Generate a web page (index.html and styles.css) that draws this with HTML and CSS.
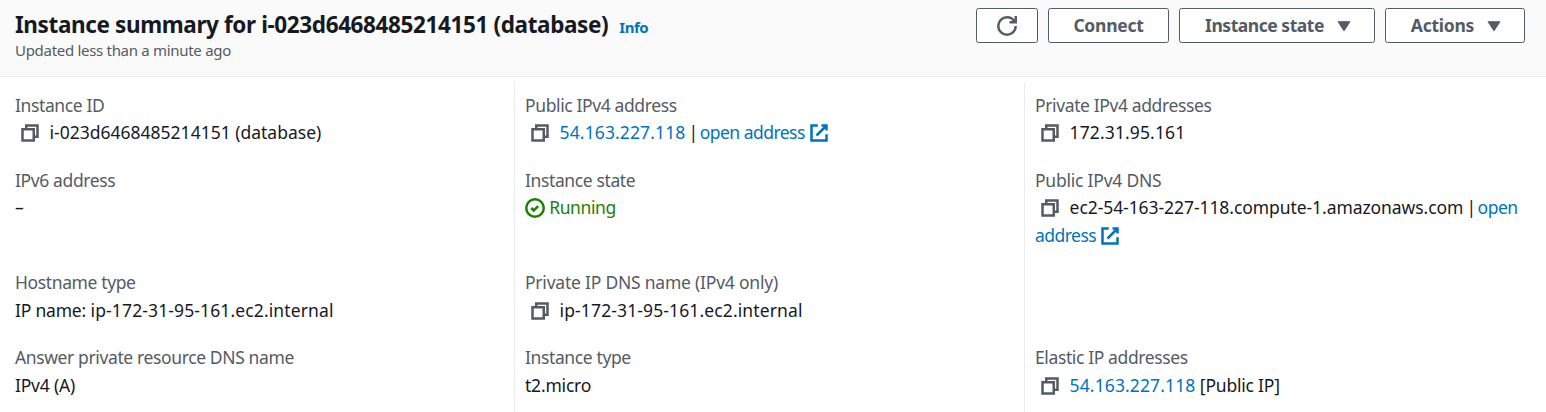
FILE: index.html
```
<!DOCTYPE html>
<html lang="en">
<head>
<meta charset="utf-8">
<title>Instance summary</title>
<link rel="stylesheet" href="styles.css">
</head>
<body>
<svg class="sprite" aria-hidden="true">
  <symbol id="copy" viewBox="0 0 16 16"><path d="M2 5h9v9H2z"/><path d="M5 5V2h9v9h-3"/></symbol>
  <symbol id="external" viewBox="0 0 16 16"><path d="M10 2h4v4"/><path d="M6 10l8-8"/><path d="M14 9.048V14H2V2h5"/></symbol>
  <symbol id="check" viewBox="0 0 16 16"><circle cx="8" cy="8" r="7"/><path d="M5 8l2 2 3.521-3.521"/></symbol>
  <symbol id="refresh" viewBox="0 0 16 16"><path d="M15 8c0 3.866-3.134 7-7 7s-7-3.134-7-7 3.134-7 7-7c2.79 0 5.2 1.63 6.32 4"/><path d="M10 5h5V0"/></symbol>
  <symbol id="caret" viewBox="0 0 16 16"><path class="solid" d="M3.4 4.6h9.2L8 11.6z"/></symbol>
</svg>
<header class="header">
  <div class="heading">
    <h1 class="title"><span class="title-text">Instance summary for i-023d6468485214151 (database)</span><a class="info">Info</a></h1>
    <p class="updated">Updated less than a minute ago</p>
  </div>
  <div class="actions">
    <button class="button button-refresh" aria-label="Refresh"><svg class="icon"><use href="#refresh"/></svg></button>
    <button class="button button-connect">Connect</button>
    <button class="button button-state">Instance state<svg class="icon caret"><use href="#caret"/></svg></button>
    <button class="button button-actions">Actions<svg class="icon caret"><use href="#caret"/></svg></button>
  </div>
</header>
<main class="details">
  <div class="cell">
    <div class="label">Instance ID</div>
    <div class="value"><svg class="icon copy"><use href="#copy"/></svg>i-023d6468485214151 (database)</div>
  </div>
  <div class="cell">
    <div class="label">Public IPv4 address</div>
    <div class="value"><svg class="icon copy"><use href="#copy"/></svg><a class="link ip">54.163.227.118</a><span class="separator"> | </span><a class="link open">open address <svg class="icon"><use href="#external"/></svg></a></div>
  </div>
  <div class="cell">
    <div class="label">Private IPv4 addresses</div>
    <div class="value"><svg class="icon copy"><use href="#copy"/></svg><span class="ip">172.31.95.161</span></div>
  </div>
  <div class="cell">
    <div class="label">IPv6 address</div>
    <div class="value">–</div>
  </div>
  <div class="cell">
    <div class="label">Instance state</div>
    <div class="value running"><svg class="icon"><use href="#check"/></svg> Running</div>
  </div>
  <div class="cell">
    <div class="label label-dns">Public IPv4 DNS</div>
    <div class="value"><svg class="icon copy"><use href="#copy"/></svg><span class="dns">ec2-54-163-227-118.compute-1.amazonaws.com</span><span class="separator"> | </span><a class="link open">open address <svg class="icon"><use href="#external"/></svg></a></div>
  </div>
  <div class="cell">
    <div class="label">Hostname type</div>
    <div class="value"><span class="note">IP name:</span> <span class="ip">ip-172-31-95-161.ec2.internal</span></div>
  </div>
  <div class="cell">
    <div class="label label-dns">Private IP DNS name (IPv4 only)</div>
    <div class="value"><svg class="icon copy"><use href="#copy"/></svg><span class="ip">ip-172-31-95-161.ec2.internal</span></div>
  </div>
  <div class="cell"></div>
  <div class="cell">
    <div class="label">Answer private resource DNS name</div>
    <div class="value note">IPv4 (A)</div>
  </div>
  <div class="cell">
    <div class="label">Instance type</div>
    <div class="value note">t2.micro</div>
  </div>
  <div class="cell">
    <div class="label">Elastic IP addresses</div>
    <div class="value"><svg class="icon copy"><use href="#copy"/></svg><a class="link ip">54.163.227.118</a><span class="note"> [Public IP]</span></div>
  </div>
</main>
</body>
</html>
```
FILE: styles.css
```
* { box-sizing: border-box; }
body {
  margin: 0;
  height: 412px;
  overflow: hidden;
  background: #fff;
  color: #16191f;
  font: 17.5px/27.5px "Noto Sans", sans-serif;
}
.sprite { display: none; }
.header {
  display: flex;
  justify-content: space-between;
  align-items: flex-start;
  height: 77px;
  padding: 8px 21px 0 15px;
  background: #fafafa;
  border-bottom: 1px solid #eaeded;
}
.title {
  display: flex;
  align-items: baseline;
  margin: 0;
  padding-top: 2px;
  font-size: 22.5px;
  line-height: 30px;
  font-weight: 700;
  white-space: nowrap;
}
.title-text { letter-spacing: -0.38px; }
.info {
  margin-left: 11px;
  font-size: 15px;
  letter-spacing: -0.5px;
  color: #0073bb;
}
.updated {
  margin: 0;
  font-size: 15px;
  line-height: 16px;
  color: #545b64;
  letter-spacing: -0.3px;
}
.actions { display: flex; gap: 10px; }
.button {
  display: flex;
  align-items: center;
  justify-content: center;
  height: 35px;
  padding: 0;
  border: 1px solid #545b64;
  border-radius: 2.5px;
  background: #fff;
  color: #545b64;
  font: 700 17.5px/27.5px "Noto Sans", sans-serif;
  letter-spacing: -0.25px;
}
.button-refresh { width: 62px; }
.button-connect { width: 121px; }
.button-state { width: 196px; letter-spacing: -0.47px; }
.button-actions { width: 140px; }
.icon {
  width: 20px;
  height: 20px;
  overflow: visible;
  vertical-align: -4px;
  fill: none;
  stroke: currentColor;
  stroke-width: 2;
}
.caret { margin: 0 -5px 0 10px; }
.solid { fill: currentColor; stroke-width: 1; stroke-linejoin: round; }
.copy { margin: 0 10px 0 4.6px; color: #545b64; }
.details {
  display: grid;
  grid-template-columns: 509px 510px 510px;
  padding: 4.6px 0 0 5px;
}
.cell { padding: 10px; border-left: 1px solid #eaeded; }
.cell:nth-child(3n + 1) { border-left: 0; }
.cell:nth-last-child(-n + 3) { padding-bottom: 15px; }
.label { color: #545b64; letter-spacing: -0.38px; }
.label-dns { letter-spacing: -0.22px; }
.value { letter-spacing: 0; }
.ip { letter-spacing: 0.12px; }
.dns { letter-spacing: -0.07px; }
.separator { letter-spacing: -1.5px; }
.open { letter-spacing: -0.53px; }
.note { letter-spacing: -0.2px; }
.link { color: #0073bb; }
.running { color: #1d8102; letter-spacing: -0.4px; }
```
